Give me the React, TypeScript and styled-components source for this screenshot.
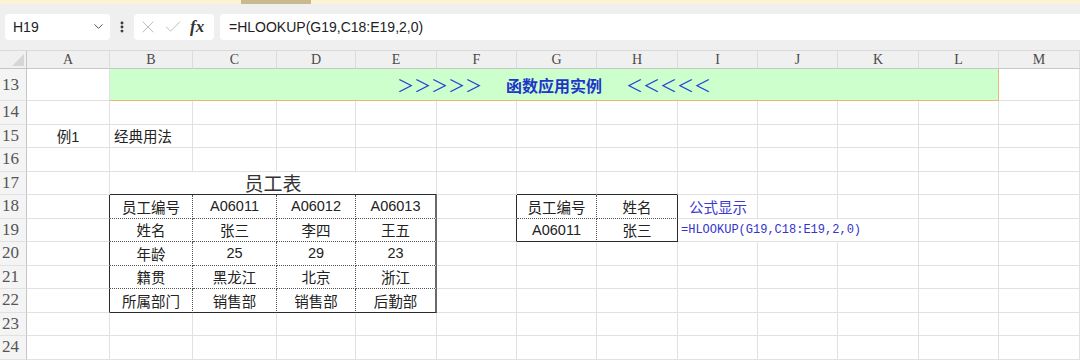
import React from 'react';
import styled, { createGlobalStyle, css } from 'styled-components';
import { ChevronDown, EllipsisVertical, X, Check } from 'lucide-react';

const GlobalStyle = createGlobalStyle`
  html, body {
    margin: 0;
    padding: 0;
    background: #ffffff;
    overflow: hidden;
  }
  * {
    box-sizing: border-box;
  }
`;

const SANS = `"Liberation Sans", "Noto Sans CJK SC", sans-serif`;
const SERIF = `"Liberation Serif", "Noto Sans CJK SC", serif`;

const COLUMNS = ['A', 'B', 'C', 'D', 'E', 'F', 'G', 'H', 'I', 'J', 'K', 'L', 'M'];
const COL_WIDTHS = [83, 83, 84, 79, 81, 80, 80, 81, 80, 80, 81, 80, 81];
const ROWS = [13, 14, 15, 16, 17, 18, 19, 20, 21, 22, 23, 24];

type Kind = 'plain' | 'center' | 'left' | 'title' | 'banner' | 'note' | 'formula';

interface CellSpec {
  text?: string;
  kind: Kind;
  span?: number;
}

// content of the sheet, keyed by cell address
const cells: Record<string, CellSpec> = {
  B13: { kind: 'banner', span: 11 },
  A15: { text: '例1', kind: 'center' },
  B15: { text: '经典用法', kind: 'left' },
  B17: { text: '员工表', kind: 'title', span: 4 },
  B18: { text: '员工编号', kind: 'center' },
  C18: { text: 'A06011', kind: 'center' },
  D18: { text: 'A06012', kind: 'center' },
  E18: { text: 'A06013', kind: 'center' },
  B19: { text: '姓名', kind: 'center' },
  C19: { text: '张三', kind: 'center' },
  D19: { text: '李四', kind: 'center' },
  E19: { text: '王五', kind: 'center' },
  B20: { text: '年龄', kind: 'center' },
  C20: { text: '25', kind: 'center' },
  D20: { text: '29', kind: 'center' },
  E20: { text: '23', kind: 'center' },
  B21: { text: '籍贯', kind: 'center' },
  C21: { text: '黑龙江', kind: 'center' },
  D21: { text: '北京', kind: 'center' },
  E21: { text: '浙江', kind: 'center' },
  B22: { text: '所属部门', kind: 'center' },
  C22: { text: '销售部', kind: 'center' },
  D22: { text: '销售部', kind: 'center' },
  E22: { text: '后勤部', kind: 'center' },
  G18: { text: '员工编号', kind: 'center' },
  H18: { text: '姓名', kind: 'center' },
  G19: { text: 'A06011', kind: 'center' },
  H19: { text: '张三', kind: 'center' },
  I18: { text: '公式显示', kind: 'note' },
  // the formula text spills over J and K, which hides their grid lines
  I19: { text: '=HLOOKUP(G19,C18:E19,2,0)', kind: 'formula', span: 3 },
};

// bordered tables: first/last column index (A = 0) and first/last row
const tables = [
  { c1: 1, c2: 4, r1: 18, r2: 22 },
  { c1: 6, c2: 7, r1: 18, r2: 19 },
];

const GRID = '1px solid #e1e1e1';
const SOLID = '1px solid #2a2a2a';
const EDGE = '2px solid #6a6a6a';
const DOTTED = '1px dotted #555555';
const BAND = '1px solid #eeb672';

const rightBorder = (row: number, col: number, span: number) => {
  const last = col + span - 1;
  if (row === 13 && col === 1) return BAND;
  for (const t of tables) {
    if (row < t.r1 || row > t.r2) continue;
    if (last === t.c2) return t.c2 === 4 ? EDGE : SOLID;
    if (last === t.c1 - 1) return SOLID;
    if (last >= t.c1 && last < t.c2) return DOTTED;
  }
  return GRID;
};

const bottomBorder = (row: number, col: number) => {
  if (row === 13 && col >= 1 && col <= 11) return BAND;
  for (const t of tables) {
    if (col < t.c1 || col > t.c2) continue;
    if (row === t.r2 || row === t.r1 - 1) return SOLID;
    if (row >= t.r1 && row < t.r2) return DOTTED;
  }
  return GRID;
};

const TopStrip = styled.div`
  display: flex;
  height: 4px;
  background: #fcf2d4;
`;

const StripThumb = styled.div`
  width: 70px;
  margin-left: 241px;
  background: #c9b98f;
`;

const Toolbar = styled.div`
  display: flex;
  align-items: center;
  gap: 6px;
  height: 47px;
  padding: 0 0 1px 5px;
  background: #efefef;
  border-bottom: 1px solid #dadada;
`;

const NameBox = styled.div`
  display: flex;
  align-items: center;
  justify-content: space-between;
  width: 105px;
  height: 26px;
  padding: 0 4px 0 8px;
  background: #ffffff;
  border-radius: 4px;
  font-family: ${SANS};
  font-size: 14px;
  color: #222;
`;

const Grip = styled.div`
  display: flex;
  align-items: center;
  color: #333;
  margin: 0 -1px;
`;

const ActionBox = styled.div`
  display: flex;
  align-items: center;
  gap: 5px;
  width: 80px;
  height: 26px;
  padding: 0 6px 0 4px;
  background: #ffffff;
  border-radius: 4px;
  color: #bdbdbd;
`;

const Fx = styled.span`
  margin-left: 2px;
  font-family: ${SERIF};
  font-style: italic;
  font-weight: bold;
  font-size: 17px;
  color: #333;
`;

const FormulaInput = styled.div`
  flex: 1;
  display: flex;
  align-items: center;
  height: 26px;
  padding-left: 9px;
  background: #ffffff;
  border-radius: 4px 0 0 4px;
  font-family: ${SANS};
  font-size: 14px;
  color: #222;
`;

const Sheet = styled.div`
  display: grid;
  grid-template-columns: 27px ${COL_WIDTHS.map((w) => `${w}px`).join(' ')};
  grid-template-rows: 18px 32px repeat(11, 23.5px);
`;

const Corner = styled.div`
  position: relative;
  background: #f0f0f0;
  border-right: 1px solid #c6c6c6;
  border-bottom: 1px solid #c6c6c6;

  &::after {
    content: '';
    position: absolute;
    right: 2px;
    bottom: 2px;
    border-left: 12px solid transparent;
    border-bottom: 12px solid #d6d6d6;
  }
`;

const ColHead = styled.div`
  display: flex;
  align-items: center;
  justify-content: center;
  padding-top: 1px;
  background: #f0f0f0;
  border-right: 1px solid #dcdcdc;
  border-bottom: 1px solid #c6c6c6;
  font-family: ${SERIF};
  font-size: 14px;
  color: #4a4a4a;
`;

const RowHead = styled.div`
  display: flex;
  align-items: center;
  padding-left: 2px;
  background: #f4f4f4;
  border-right: 1px solid #c6c6c6;
  border-bottom: 1px solid #e1e1e1;
  font-family: ${SERIF};
  font-size: 17px;
  color: #555;
`;

const kindStyles: Record<Kind, ReturnType<typeof css>> = {
  plain: css``,
  center: css`
    justify-content: center;
  `,
  left: css`
    padding-left: 4px;
  `,
  title: css`
    justify-content: center;
    font-size: 19px;
    color: #333;
  `,
  banner: css`
    justify-content: center;
    gap: 24px;
    background: #ccffcc;
  `,
  note: css`
    padding-left: 11px;
    color: #3a3ad0;
  `,
  formula: css`
    padding-left: 3px;
    font-family: "Liberation Mono", "DejaVu Sans Mono", monospace;
    font-size: 12px;
    color: #3434cc;
    white-space: nowrap;
  `,
};

const Cell = styled.div<{ $kind: Kind; $span: number; $right: string; $bottom: string }>`
  display: flex;
  align-items: center;
  grid-column: span ${(p) => p.$span};
  border-right: ${(p) => p.$right};
  border-bottom: ${(p) => p.$bottom};
  font-family: ${SANS};
  font-size: 14.5px;
  color: #222;
  ${(p) => kindStyles[p.$kind]}
`;

const Chevrons = styled.span`
  font-family: "Noto Sans CJK SC", sans-serif;
  font-size: 17px;
  color: #2442d6;
`;

const BannerTitle = styled.span`
  font-family: "Noto Sans CJK SC", serif;
  font-weight: bold;
  font-size: 16px;
  color: #1d36c8;
`;

const renderRow = (row: number) => {
  const out: React.ReactNode[] = [<RowHead key={`h${row}`}>{row}</RowHead>];
  let col = 0;
  while (col < COLUMNS.length) {
    const addr = `${COLUMNS[col]}${row}`;
    const spec = cells[addr] ?? { kind: 'plain' as Kind };
    const span = spec.span ?? 1;
    out.push(
      <Cell
        key={addr}
        $kind={spec.kind}
        $span={span}
        $right={rightBorder(row, col, span)}
        $bottom={bottomBorder(row, col)}
      >
        {spec.kind === 'banner' ? (
          <>
            <Chevrons>＞＞＞＞＞</Chevrons>
            <BannerTitle>函数应用实例</BannerTitle>
            <Chevrons>＜＜＜＜＜</Chevrons>
          </>
        ) : (
          spec.text
        )}
      </Cell>
    );
    col += span;
  }
  return out;
};

const App = () => {
  return (
    <>
      <GlobalStyle />
      <TopStrip>
        <StripThumb />
      </TopStrip>
      <Toolbar>
        <NameBox>
          H19
          <ChevronDown size={15} color="#555" strokeWidth={1.6} />
        </NameBox>
        <Grip>
          <EllipsisVertical size={14} strokeWidth={3} />
        </Grip>
        <ActionBox>
          <X size={20} strokeWidth={1.2} />
          <Check size={20} strokeWidth={1.2} />
          <Fx>fx</Fx>
        </ActionBox>
        <FormulaInput>=HLOOKUP(G19,C18:E19,2,0)</FormulaInput>
      </Toolbar>
      <Sheet>
        <Corner />
        {COLUMNS.map((c) => (
          <ColHead key={c}>{c}</ColHead>
        ))}
        {ROWS.map((r) => renderRow(r))}
      </Sheet>
    </>
  );
};

export default App;
